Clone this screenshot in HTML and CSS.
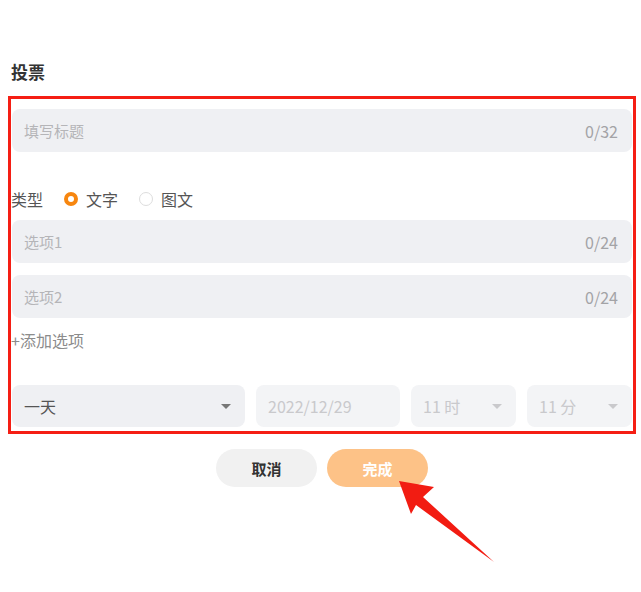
FILE: index.html
```html
<!DOCTYPE html>
<html>
<head>
    <title>投票</title>
    <meta name="viewport" content="width=device-width, initial-scale=1.0">
    <link rel="stylesheet" href="styles.css">
</head>
<body>
    <div class="page">
        <h2 class="title">投票</h2>

        <!-- vote form -->
        <div class="form">
            <div class="field first">
                <span class="placeholder">填写标题</span>
                <span class="count">0/32</span>
            </div>

            <div class="type-row">
                <span class="label">类型</span>
                <label class="radio checked"><i></i>文字</label>
                <label class="radio"><i></i>图文</label>
            </div>

            <div class="field option">
                <span class="placeholder">选项1</span>
                <span class="count">0/24</span>
            </div>
            <div class="field option">
                <span class="placeholder">选项2</span>
                <span class="count">0/24</span>
            </div>

            <div class="add-option">+添加选项</div>

            <div class="deadline">
                <div class="select duration">一天<b class="caret"></b></div>
                <div class="select date disabled">2022/12/29</div>
                <div class="select hour disabled">11 时<b class="caret"></b></div>
                <div class="select minute disabled">11 分<b class="caret"></b></div>
            </div>
        </div>

        <div class="actions">
            <button class="btn cancel">取消</button>
            <button class="btn done">完成</button>
        </div>

        <!-- pointer to the submit button -->
        <svg class="pointer" width="641" height="592" viewBox="0 0 641 592">
            <polygon points="399,481 434,487 423,497 494,562 416,505 411,514" fill="#f21c12"/>
        </svg>
    </div>
</body>
</html>
```

FILE: styles.css
```css
body {
    margin: 0;
    font-family: "Noto Sans CJK SC", "Noto Sans", sans-serif;
    background-color: #fff;
    color: #555;
}

.page {
    position: relative;
    width: 641px;
    height: 592px;
    padding-top: 60px;
    box-sizing: border-box;
}

.title {
    margin: 0 0 0 11px;
    height: 36px;
    font-size: 17px;
    line-height: 24px;
    font-weight: bold;
    color: #333;
}

.form {
    margin-left: 8px;
    width: 628px;
    height: 338px;
    box-sizing: border-box;
    border: 3px solid #f51e14;
    display: flex;
    flex-direction: column;
}

.field {
    margin: 0 1px;
    height: 43px;
    padding: 0 14px 0 12px;
    border-radius: 8px;
    background-color: #eff0f3;
    display: flex;
    align-items: center;
    justify-content: space-between;
    font-size: 15px;
}

.field.first {
    margin-top: 10px;
}

.field.option + .field.option {
    margin-top: 12px;
}

.placeholder {
    color: #b5b5b8;
}

.count {
    color: #a3a3a6;
    font-size: 16px;
}

.type-row {
    margin-top: 37px;
    height: 20px;
    margin-bottom: 11px;
    display: flex;
    align-items: center;
    font-size: 16px;
}

.type-row .label {
    margin-right: 21px;
}

.radio {
    display: flex;
    align-items: center;
    margin-right: 21px;
    color: #555;
}

.radio i {
    width: 14px;
    height: 14px;
    box-sizing: border-box;
    border: 1px solid #ddd;
    border-radius: 50%;
    margin-right: 8px;
}

.radio.checked i {
    border: 4px solid #f7860f;
}

.add-option {
    margin-top: 12px;
    height: 20px;
    line-height: 20px;
    font-size: 16px;
    color: #8c8c8c;
}

.deadline {
    margin: 35px 1px 0;
    display: flex;
    gap: 11px;
}

.select {
    position: relative;
    height: 42px;
    border-radius: 8px;
    background-color: #eff0f3;
    padding-left: 12px;
    box-sizing: border-box;
    display: flex;
    align-items: center;
    font-size: 16px;
    color: #555;
}

.select.disabled {
    background-color: #f3f4f6;
    color: #c9c9cc;
}

.duration { width: 233px; }
.date { width: 144px; }
.hour, .minute { width: 105px; }

.caret {
    position: absolute;
    right: 14px;
    top: 19px;
    border-left: 5px solid transparent;
    border-right: 5px solid transparent;
    border-top: 5px solid #777;
}

.disabled .caret {
    border-top-color: #c9c9cc;
}

.actions {
    margin-top: 15px;
    padding-left: 3px;
    display: flex;
    justify-content: center;
    gap: 10px;
}

.btn {
    width: 101px;
    height: 38px;
    border: none;
    border-radius: 19px;
    font-family: inherit;
    font-size: 15px;
    font-weight: bold;
}

.btn.cancel {
    background-color: #f1f1f1;
    color: #333;
}

.btn.done {
    background-color: #fdc287;
    color: #fff;
}

.pointer {
    position: absolute;
    left: 0;
    top: 0;
    pointer-events: none;
}
```
